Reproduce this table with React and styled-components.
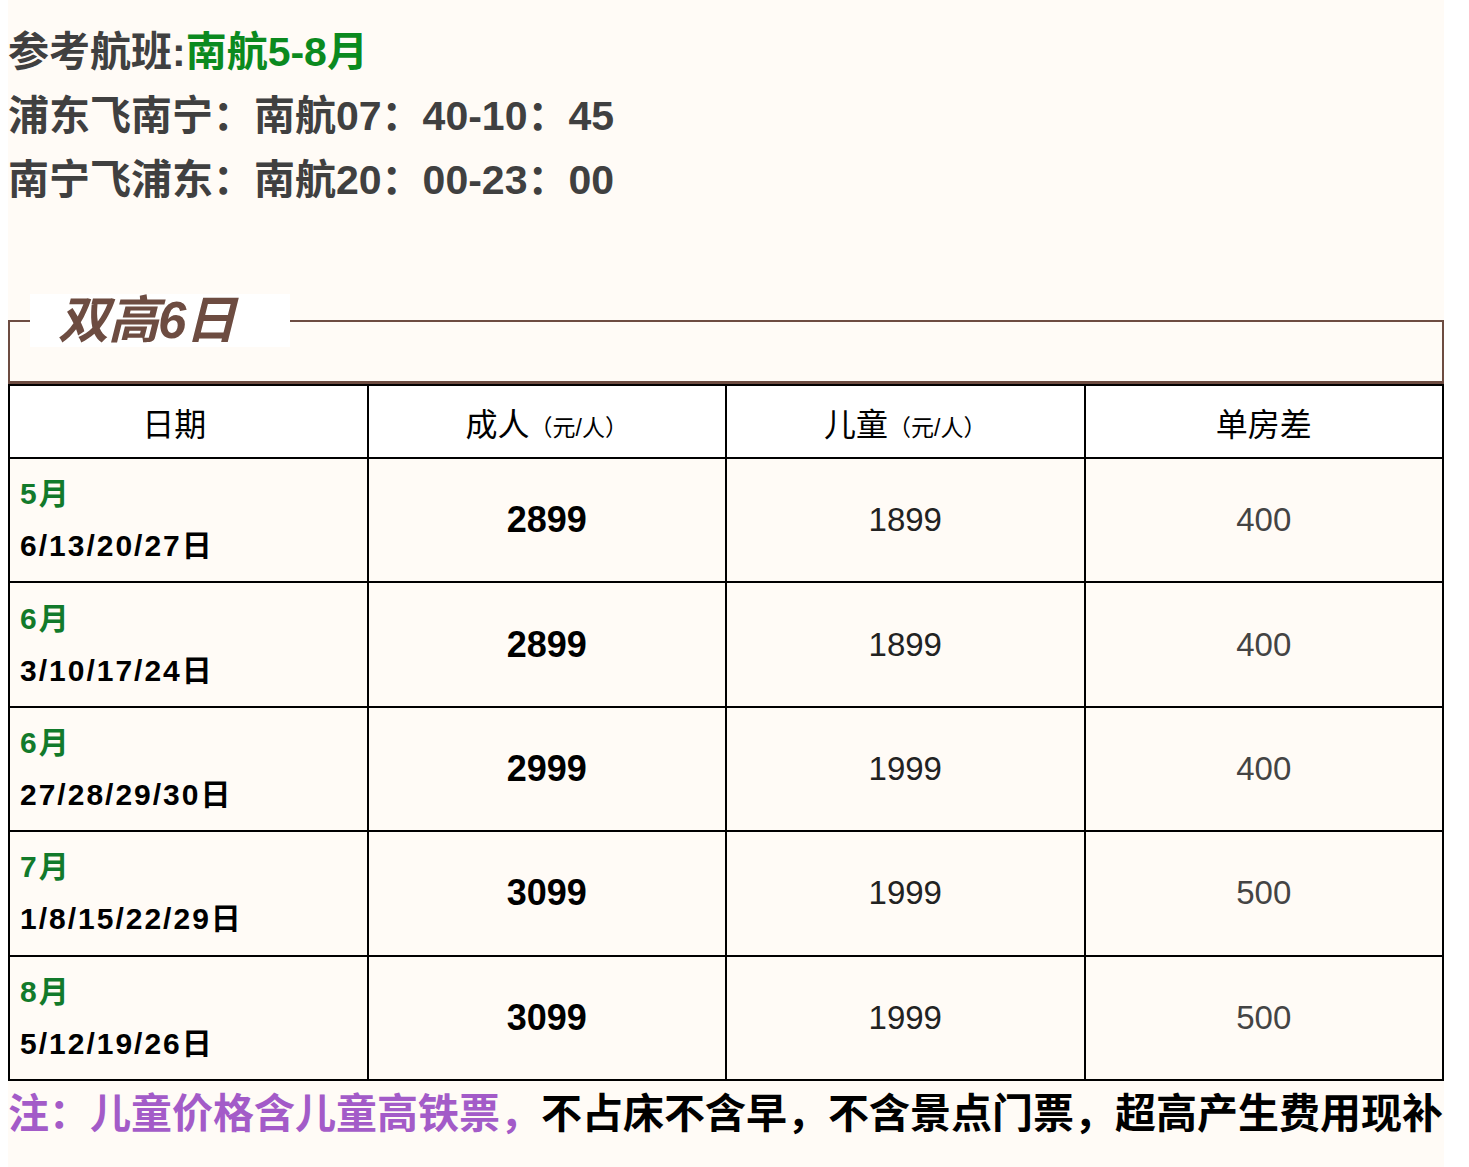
import React from 'react';
import styled, { createGlobalStyle } from 'styled-components';

const GlobalStyle = createGlobalStyle`
  body {
    margin: 0 0 0 8px;
    background: #ffffff;
    font-family: "Liberation Sans", "Noto Sans CJK SC", sans-serif;
  }
`;

const Page = styled.div`
  width: 1436px;
  min-height: 1167px;
  background: #fffbf6;
  padding-top: 20px;
  box-sizing: border-box;
`;

const FlightInfo = styled.div`
  color: #404040;
  font-size: 41px;
  font-weight: 700;
  line-height: 64px;
`;

const Green = styled.span`
  color: #0b8a1f;
`;

const Box = styled.fieldset`
  margin: 82px 0 0;
  padding: 0 0 0 20px;
  height: 90px;
  box-sizing: border-box;
  border: 2px solid #6d4c41;
  border-bottom-width: 3px;
`;

const Legend = styled.legend`
  width: 260px;
  height: 53px;
  padding: 0 0 0 28px;
  box-sizing: border-box;
  background: #ffffff;
  color: #6d4c41;
  font-size: 51px;
  font-weight: 700;
  font-style: italic;
  line-height: 53px;
  letter-spacing: -1px;
`;

const Table = styled.table`
  width: 1436px;
  border-collapse: collapse;
  table-layout: fixed;

  td, th {
    border: 2px solid #000;
  }
`;

const HeadCell = styled.th`
  height: 71px;
  padding: ${p => (p.$shift ? '0 28px 0 0' : '0')};
  background: #ffffff;
  color: #000;
  font-size: 32px;
  font-weight: 400;
  text-align: center;
`;

const Unit = styled.span`
  font-size: 23px;
`;

const Cell = styled.td`
  height: 122.4px;
  text-align: ${p => (p.$left ? 'left' : 'center')};
  padding: ${p => (p.$left ? '0 0 0 10px' : '0')};
  font-size: ${p => (p.$bold ? '36px' : '33px')};
  font-weight: ${p => (p.$bold ? 700 : 400)};
  color: ${p => p.$color || '#000'};
`;

const Month = styled.div`
  color: #127a2b;
  font-size: 30px;
  font-weight: 700;
  line-height: 52px;
  letter-spacing: 2px;
`;

const Days = styled.div`
  color: #000;
  font-size: 30px;
  font-weight: 700;
  line-height: 52px;
  letter-spacing: 2px;
`;

const Note = styled.div`
  font-size: 41px;
  font-weight: 700;
  line-height: 66px;
  color: #000;
  white-space: nowrap;
`;

const Purple = styled.span`
  color: #a35bc8;
`;

const rows = [
  { month: '5月', days: '6/13/20/27日', adult: '2899', child: '1899', single: '400' },
  { month: '6月', days: '3/10/17/24日', adult: '2899', child: '1899', single: '400' },
  { month: '6月', days: '27/28/29/30日', adult: '2999', child: '1999', single: '400' },
  { month: '7月', days: '1/8/15/22/29日', adult: '3099', child: '1999', single: '500' },
  { month: '8月', days: '5/12/19/26日', adult: '3099', child: '1999', single: '500' },
];

export default function App() {
  return (
    <Page>
      <GlobalStyle />
      <FlightInfo>
        <div>参考航班:<Green>南航5-8月</Green></div>
        <div>浦东飞南宁：南航07：40-10：45</div>
        <div>南宁飞浦东：南航20：00-23：00</div>
      </FlightInfo>

      <Box>
        <Legend>双高6日</Legend>
      </Box>

      <Table>
        <thead>
          <tr>
            <HeadCell $shift>日期</HeadCell>
            <HeadCell>成人<Unit>（元/人）</Unit></HeadCell>
            <HeadCell>儿童<Unit>（元/人）</Unit></HeadCell>
            <HeadCell>单房差</HeadCell>
          </tr>
        </thead>
        <tbody>
          {rows.map((r, i) => (
            <tr key={i}>
              <Cell $left>
                <Month>{r.month}</Month>
                <Days>{r.days}</Days>
              </Cell>
              <Cell $bold>{r.adult}</Cell>
              <Cell $color="#222">{r.child}</Cell>
              <Cell $color="#444">{r.single}</Cell>
            </tr>
          ))}
        </tbody>
      </Table>

      <Note>
        <Purple>注：儿童价格含儿童高铁票，</Purple>不占床不含早，不含景点门票，超高产生费用现补
      </Note>
    </Page>
  );
}
